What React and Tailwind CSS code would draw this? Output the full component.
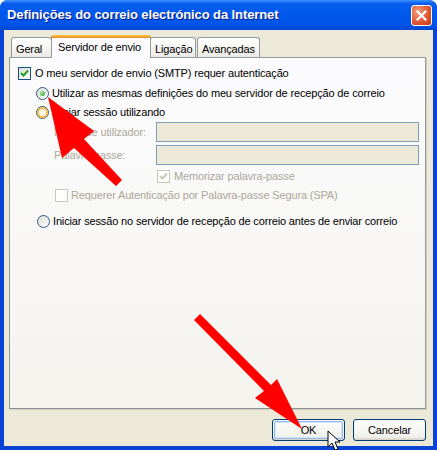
import React from 'react';

const font = "font-['Liberation_Sans',Arial,sans-serif]";

const Radio = ({ checked, hover }) => (
  <span className="w-[13px] h-[13px] rounded-full border border-[#2F5A8A] bg-[linear-gradient(135deg,#DCDCD4,#FFFFFF)] flex items-center justify-center shrink-0">
    {hover && <span className="w-[11px] h-[11px] rounded-full border-2 border-[#F6BC4A] bg-[#FFFDF0]" />}
    {checked && <span className="w-[5px] h-[5px] rounded-full bg-[radial-gradient(circle_at_35%_35%,#A7E79A,#21A121)]" />}
  </span>
);

const Check = ({ checked, disabled }) => (
  <span
    className={`w-[13px] h-[13px] border flex items-center justify-center shrink-0 ${
      disabled ? 'border-[#CAC8BB] bg-white' : 'border-[#1C5180] bg-[linear-gradient(135deg,#DCDCD4,#FFFFFF)]'
    }`}
  >
    {checked && (
      <svg width="9" height="9" viewBox="0 0 9 9">
        <path d="M1 4 L3.5 6.5 L8 1.5" fill="none" stroke={disabled ? '#CAC8BB' : '#21A121'} strokeWidth="2" />
      </svg>
    )}
  </span>
);

const Tab = ({ label, active, w }) =>
  active ? (
    <div className={`relative z-10 -mb-px h-[23px] ${w} -mx-px rounded-t-[3px] border-x border-[#919B9C] bg-[#FCFCFE] flex flex-col`}>
      <div className="h-[3px] rounded-t-[3px] bg-[linear-gradient(#FFC83C,#E68B2C)] -mx-px" />
      <div className="flex-1 pl-[6px] pt-[1px] text-[11px] text-black">{label}</div>
    </div>
  ) : (
    <div className={`h-[20px] ${w} rounded-t-[3px] border border-b-0 border-[#919B9C] bg-[linear-gradient(#FFFFFF,#ECEBE6)] pl-[4px] pt-[3px] text-[11px] text-black`}>
      {label}
    </div>
  );

const XpButton = ({ label, focused }) => (
  <div className="w-[73px] h-[22px] rounded-[3px] border border-[#003C74] bg-[linear-gradient(#FFFFFF,#F0F0EA_85%,#D6D0C5)] p-px">
    <div
      className={`w-full h-full rounded-[2px] flex items-center justify-center text-[11px] text-black ${
        focused ? 'border border-[#98B8EA] shadow-[inset_0_0_0_1px_#CEE7FF]' : ''
      }`}
    >
      {label}
    </div>
  </div>
);

export default function App() {
  return (
    <div className={`relative w-[437px] h-[450px] bg-white overflow-hidden tracking-[-0.15px] ${font}`}>
      <div className="w-full h-full flex flex-col rounded-t-[8px] overflow-hidden bg-[#0843D6]">
        {/* Title bar */}
        <div className="h-[30px] shrink-0 flex items-center justify-between pl-[7px] pr-[5px] bg-[linear-gradient(#3C95FF_0%,#0A5CEF_12%,#0058EE_45%,#0055E8_80%,#0046D4_100%)]">
          <span className="text-white font-bold text-[13px] tracking-[-0.1px] [text-shadow:1px_1px_#0A1883]">
            Definições do correio electrónico da Internet
          </span>
          <div className="w-[21px] h-[21px] rounded-[3px] border border-white bg-[radial-gradient(circle_at_30%_30%,#F19B7F,#E0532F_60%,#C8391A)] flex items-center justify-center">
            <svg width="11" height="11" viewBox="0 0 11 11">
              <path d="M1.5 1.5 L9.5 9.5 M9.5 1.5 L1.5 9.5" stroke="white" strokeWidth="2.2" strokeLinecap="square" />
            </svg>
          </div>
        </div>

        {/* Body */}
        <div className="flex-1 mx-[4px] mb-[4px] bg-[#ECE9D8] flex flex-col pl-[5px] pr-[7px] pt-[4px]">
          <div className="flex items-end pl-[2px] h-[23px]">
            <Tab label="Geral" w="w-[41px]" />
            <Tab label="Servidor de envio" active w="w-[100px]" />
            <Tab label="Ligação" w="w-[46px]" />
            <div className="w-px" />
            <Tab label="Avançadas" w="w-[63px]" />
          </div>

          <div className="h-[352px] border border-[#919B9C] border-b-[#8A9394] shadow-[1px_1px_0_#D0CDBE] bg-[linear-gradient(#FCFCFE,#F4F3EE)] flex flex-col pl-[8px] text-[11px] text-black">
            <div className="mt-[9px] h-[13px] flex items-center gap-[4px]">
              <Check checked />
              <span>O meu servidor de envio (SMTP) requer autenticação</span>
            </div>
            <div className="mt-[7px] h-[13px] flex items-center gap-[3px] pl-[18px]">
              <Radio checked />
              <span>Utilizar as mesmas definições do meu servidor de recepção de correio</span>
            </div>
            <div className="mt-[6px] h-[13px] flex items-center gap-[3px] pl-[18px]">
              <Radio hover />
              <span>Iniciar sessão utilizando</span>
            </div>

            <div className="mt-[3px] h-[20px] flex items-center text-[#ACA899]">
              <span className="w-[138px] pl-[36px]">Nome de utilizador:</span>
              <div className="w-[263px] h-[20px] border border-[#7F9DB9] bg-[#ECE9D8]" />
            </div>
            <div className="mt-[3px] h-[20px] flex items-center text-[#ACA899]">
              <span className="w-[138px] pl-[36px]">Palavra-passe:</span>
              <div className="w-[263px] h-[20px] border border-[#7F9DB9] bg-[#ECE9D8]" />
            </div>

            <div className="mt-[5px] h-[13px] flex items-center gap-[4px] pl-[139px] text-[#ACA899]">
              <Check checked disabled />
              <span>Memorizar palavra-passe</span>
            </div>
            <div className="mt-[6px] h-[13px] flex items-center gap-[3px] pl-[37px] text-[#ACA899]">
              <Check disabled />
              <span>Requerer Autenticação por Palavra-passe Segura (SPA)</span>
            </div>

            <div className="mt-[13px] h-[13px] flex items-center gap-[3px] pl-[19px]">
              <Radio />
              <span>Iniciar sessão no servidor de recepção de correio antes de enviar correio</span>
            </div>
          </div>

          <div className="flex justify-end gap-[8px] mt-[10px]">
            <XpButton label="OK" focused />
            <XpButton label="Cancelar" />
          </div>
        </div>
      </div>

      {/* Red annotation arrows and mouse cursor */}
      <svg className="absolute inset-0 pointer-events-none" width="437" height="450" viewBox="0 0 437 450">
        <polygon
          points="48,97 94,131 84,139 122,180 116,186 74,148 62,158"
          fill="#FF0000"
        />
        <polygon
          points="194,320 200,314 271,385 277,379 302,429 255,398 264,391"
          fill="#FF0000"
        />
        <path
          d="M328 431 L328 447 L332 443 L335 450 L338 449 L335 442 L340 442 Z"
          fill="white"
          stroke="black"
          strokeWidth="1"
          strokeLinejoin="miter"
        />
      </svg>
    </div>
  );
}
